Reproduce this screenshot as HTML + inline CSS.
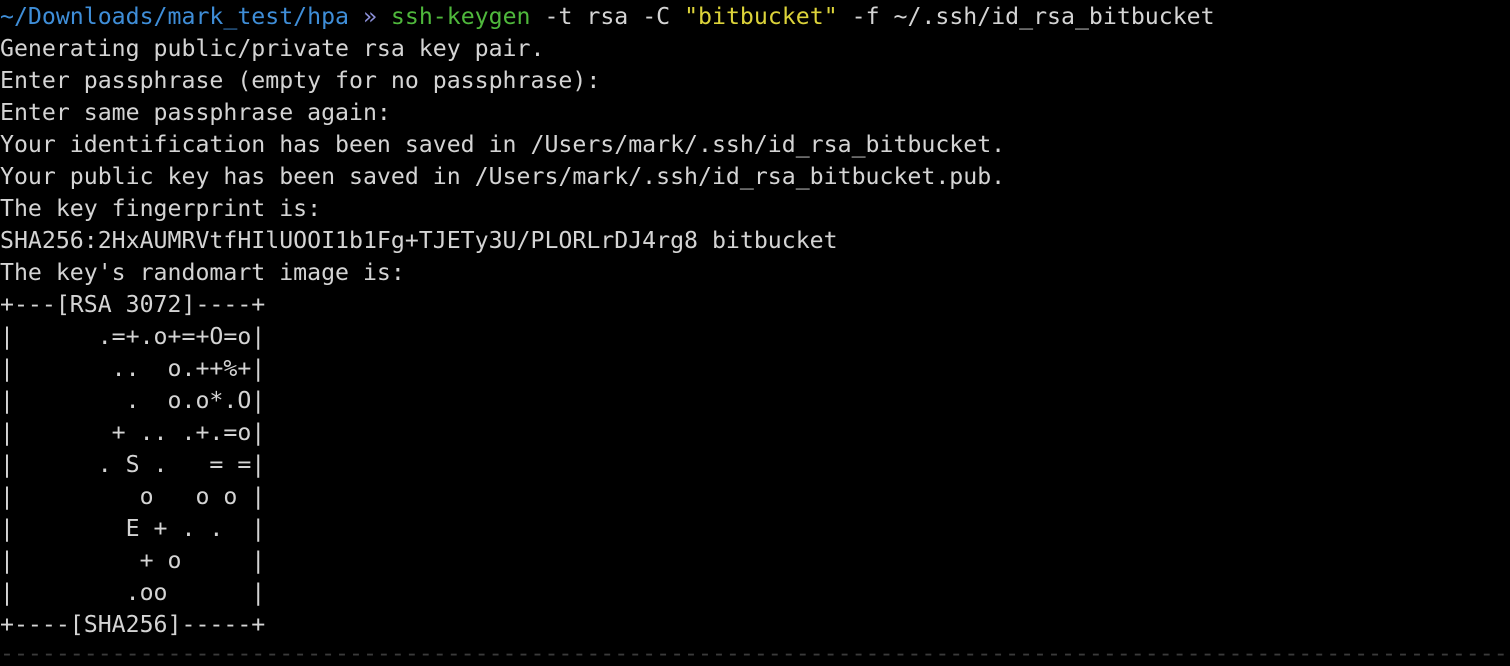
<!DOCTYPE html>
<html><head><style>
html,body{margin:0;padding:0;background:#000;width:1510px;height:664px;overflow:hidden}
pre{margin:0;position:absolute;left:0;top:1px;font-family:"DejaVu Sans Mono","Liberation Mono",monospace;font-size:23.2px;line-height:32px;color:#d4d4d4}
.b{color:#3f8ed8}.g{color:#4fb83c}.y{color:#dcd33a}.p{color:#8b8fd8}
.d{position:absolute;left:0;top:642px;font-family:"DejaVu Sans Mono",monospace;font-size:23.2px;line-height:24px;color:#3a3a3a;white-space:pre;overflow:hidden;width:1510px}
</style></head><body>
<pre><span class="b">~/Downloads/mark_test/hpa</span> <span class="p">»</span> <span class="g">ssh-keygen</span> -t rsa -C <span class="y">"bitbucket"</span> -f ~/.ssh/id_rsa_bitbucket
Generating public/private rsa key pair.
Enter passphrase (empty for no passphrase):
Enter same passphrase again:
Your identification has been saved in /Users/mark/.ssh/id_rsa_bitbucket.
Your public key has been saved in /Users/mark/.ssh/id_rsa_bitbucket.pub.
The key fingerprint is:
SHA256:2HxAUMRVtfHIlUOOI1b1Fg+TJETy3U/PLORLrDJ4rg8 bitbucket
The key's randomart image is:
+---[RSA 3072]----+
|      .=+.o+=+O=o|
|       ..  o.++%+|
|        .  o.o*.O|
|       + .. .+.=o|
|      . S .   = =|
|         o   o o |
|        E + . .  |
|         + o     |
|        .oo      |
+----[SHA256]-----+</pre>
<div class="d">--------------------------------------------------------------------------------------------------------------------</div>
</body></html>
